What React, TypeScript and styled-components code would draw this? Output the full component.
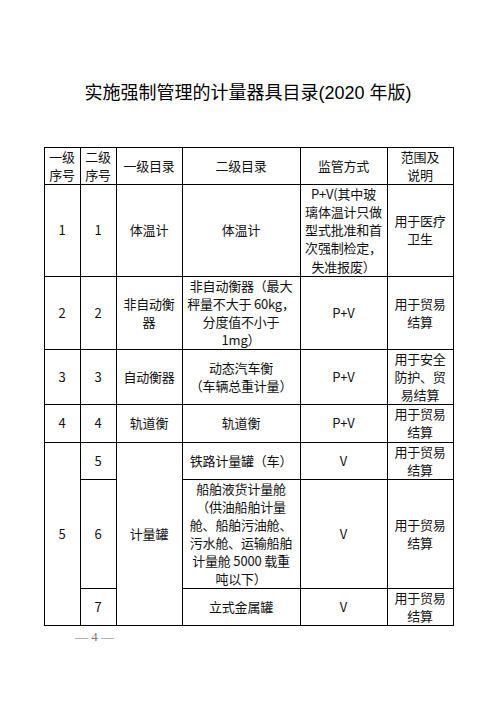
import React from 'react'
import styled, { createGlobalStyle } from 'styled-components'

const GlobalStyle = createGlobalStyle`
  html, body {
    margin: 0;
    padding: 0;
    background: #ffffff;
  }
  body {
    font-family: "Liberation Sans", "Noto Sans CJK SC", sans-serif;
    color: #111;
  }
`

interface RowData {
  cells: (string[] | null)[]
  spans?: number[]
}

const Page = styled.div`
  width: 496px;
  height: 702px;
  padding-top: 83px;
  box-sizing: border-box;
  display: flex;
  flex-direction: column;
  align-items: center;
`

const Title = styled.h1`
  margin: 0;
  font-size: 18px;
  line-height: 20px;
  font-weight: normal;
  font-family: "Liberation Sans", "Noto Sans CJK SC", sans-serif;
  color: #000;
  white-space: nowrap;
`

const Table = styled.table`
  margin-top: 44px;
  margin-left: 1px;
  border-collapse: collapse;
  table-layout: fixed;
  width: 409px;
  font-family: "Noto Sans CJK SC", "Liberation Sans", sans-serif;
  font-size: 13px;
  line-height: 18.1px;
  color: #111;
`

const Cell = styled.td`
  border: 1px solid #000;
  padding: 0;
  text-align: center;
  vertical-align: middle;
  white-space: nowrap;
  letter-spacing: -0.2px;
`

const Footer = styled.div`
  align-self: flex-start;
  margin-left: 75px;
  margin-top: 4px;
  font-family: "Liberation Serif", "Noto Sans CJK SC", serif;
  font-size: 13px;
  line-height: 14px;
  color: #777;
  white-space: nowrap;
`

const widths = [36, 36, 66, 118, 87, 66]

const Lines: React.FC<{ lines: string[] }> = ({ lines }) => (
  <>
    {lines.map((l, i) => (
      <React.Fragment key={i}>
        {i > 0 && <br />}
        {l}
      </React.Fragment>
    ))}
  </>
)

const header = [
  ['一级', '序号'],
  ['二级', '序号'],
  ['一级目录'],
  ['二级目录'],
  ['监管方式'],
  ['范围及', '说明'],
]

const rows: RowData[] = [
  {
    cells: [
      ['1'],
      ['1'],
      ['体温计'],
      ['体温计'],
      ['P+V(其中玻', '璃体温计只做', '型式批准和首', '次强制检定，', '失准报废）'],
      ['用于医疗', '卫生'],
    ],
  },
  {
    cells: [
      ['2'],
      ['2'],
      ['非自动衡', '器'],
      ['非自动衡器（最大', '秤量不大于 60kg，', '分度值不小于', '1mg）'],
      ['P+V'],
      ['用于贸易', '结算'],
    ],
  },
  {
    cells: [
      ['3'],
      ['3'],
      ['自动衡器'],
      ['动态汽车衡', '（车辆总重计量）'],
      ['P+V'],
      ['用于安全', '防护、贸', '易结算'],
    ],
  },
  {
    cells: [['4'], ['4'], ['轨道衡'], ['轨道衡'], ['P+V'], ['用于贸易', '结算']],
  },
  {
    cells: [['5'], ['5'], ['计量罐'], ['铁路计量罐（车）'], ['V'], ['用于贸易', '结算']],
    spans: [3, 1, 3, 1, 1, 1],
  },
  {
    cells: [
      null,
      ['6'],
      null,
      ['船舶液货计量舱', '（供油船舶计量', '舱、船舶污油舱、', '污水舱、运输船舶', '计量舱 5000 载重', '吨以下）'],
      ['V'],
      ['用于贸易', '结算'],
    ],
  },
  {
    cells: [null, ['7'], null, ['立式金属罐'], ['V'], ['用于贸易', '结算']],
  },
]

export default function App() {
  return (
    <>
      <GlobalStyle />
      <Page>
        <Title>实施强制管理的计量器具目录(2020 年版)</Title>
        <Table>
          <colgroup>
            {widths.map((w, i) => (
              <col key={i} style={{ width: w }} />
            ))}
          </colgroup>
          <tbody>
            <tr>
              {header.map((h, i) => (
                <Cell key={i}>
                  <Lines lines={h} />
                </Cell>
              ))}
            </tr>
            {rows.map((r, ri) => (
              <tr key={ri}>
                {r.cells.map((c, ci) =>
                  c ? (
                    <Cell key={ci} rowSpan={r.spans ? r.spans[ci] : 1}>
                      <Lines lines={c} />
                    </Cell>
                  ) : null
                )}
              </tr>
            ))}
          </tbody>
        </Table>
        <Footer>— 4 —</Footer>
      </Page>
    </>
  )
}
